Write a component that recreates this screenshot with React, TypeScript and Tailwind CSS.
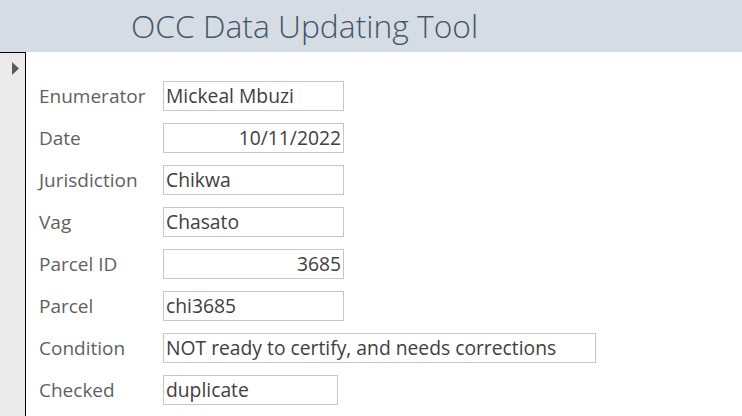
const fields: { label: string; value: string; width: string; right?: boolean }[] = [
  { label: "Enumerator", value: "Mickeal Mbuzi", width: "w-[181px]" },
  { label: "Date", value: "10/11/2022", width: "w-[181px]", right: true },
  { label: "Jurisdiction", value: "Chikwa", width: "w-[181px]" },
  { label: "Vag", value: "Chasato", width: "w-[181px]" },
  { label: "Parcel ID", value: "3685", width: "w-[181px]", right: true },
  { label: "Parcel", value: "chi3685", width: "w-[181px]" },
  { label: "Condition", value: "NOT ready to certify, and needs corrections", width: "w-[433px]" },
  { label: "Checked", value: "duplicate", width: "w-[175px]" },
];

export default function App() {
  return (
    <div className="w-[742px] h-[416px] flex flex-col bg-white overflow-hidden font-['Open_Sans',sans-serif]">
      <div className="h-[52px] shrink-0 bg-[#d6dce4] flex items-center pl-[131px]">
        <h1 className="text-[31.8px] font-light text-[#44546a] leading-none">OCC Data Updating Tool</h1>
      </div>

      <div className="flex flex-1">
        {/* record selector */}
        <div className="w-[26px] shrink-0 bg-[#ebebeb] border-t border-r border-black pt-[9px] pl-[12px]">
          <svg width="8" height="13" viewBox="0 0 8 13">
            <path d="M0 0 L7 6.5 L0 13 Z" fill="#5a5a5a" />
          </svg>
        </div>

        <div className="flex flex-col gap-[12px] pt-[29px] pl-[13px]">
          {fields.map((f) => (
            <div key={f.label} className="flex items-center h-[30px]">
              <span className="w-[124px] text-[19px] text-[#5f5f5f] whitespace-nowrap">{f.label}</span>
              <div
                className={`${f.width} h-[30px] border border-[#c6c6c6] px-[2px] flex items-center text-[19.3px] text-[#404040] whitespace-nowrap ${
                  f.right ? "justify-end" : ""
                }`}
              >
                {f.value}
              </div>
            </div>
          ))}
        </div>
      </div>
    </div>
  );
}
